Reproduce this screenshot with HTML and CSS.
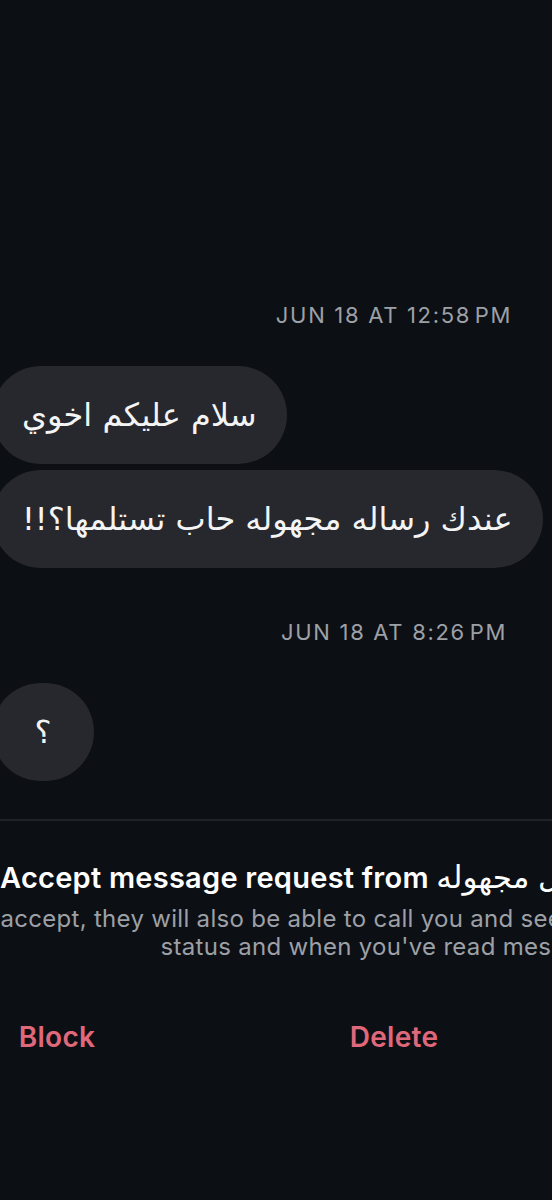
FILE: index.html
```html
<!DOCTYPE html>
<html lang="en">
<head>
    <meta charset="UTF-8">
    <meta name="viewport" content="width=device-width, initial-scale=1.0">
    <title>Message request</title>
    <link rel="stylesheet" href="styles.css">
</head>
<body>
    <div class="screen">
        <!-- Conversation -->
        <div class="conversation">
            <div class="date-divider first">JUN 18 AT 12:58&#8202;PM</div>
            <div class="bubble" dir="rtl">سلام عليكم اخوي</div>
            <div class="bubble" dir="rtl">عندك رساله مجهوله حاب تستلمها؟!!</div>

            <div class="date-divider">JUN 18 AT 8:26&#8202;PM</div>
            <div class="bubble round" dir="rtl">؟</div>
        </div>

        <!-- Message request panel -->
        <div class="request-panel">
            <div class="request-title">Accept message request from <bdi class="request-name">مجهول مجهوله</bdi>?</div>
            <p class="request-text">If you accept, they will also be able to call you and see info such as your activity<br>status and when you've read messages.</p>

            <div class="request-actions">
                <button class="action-button">Block</button>
                <button class="action-button">Delete</button>
                <button class="action-button">Accept</button>
            </div>
        </div>
    </div>
</body>
</html>
```

FILE: styles.css
```css
body {
    font-family: Inter, "DejaVu Sans", sans-serif;
    margin: 0;
    padding: 0;
    background-color: #0c0f14;
    color: #fff;
    overflow: hidden;
}
.screen {
    width: 836px;
    margin-left: -24px;
    height: 1200px;
}
.conversation {
    padding-top: 301px;
}
.date-divider {
    text-align: center;
    font-size: 22px;
    line-height: 28px;
    letter-spacing: 1.7px;
    color: #9da0a6;
    margin: 50px 0 37px;
}
.date-divider.first {
    margin: 0 0 37px;
}
.bubble {
    display: table;
    margin: 0 0 6px 16px;
    padding: 30px;
    min-width: 42px;
    background-color: #26282d;
    border-radius: 49px;
    font-family: "DejaVu Sans", sans-serif;
    font-size: 32px;
    line-height: 38px;
    color: #f4f4f5;
    text-align: center;
}
/* Styles for the request panel */
.request-panel {
    margin-top: 38px;
    border-top: 2px solid #1f2328;
}
.request-title {
    padding-left: 24px;
    margin-top: 40px;
    white-space: nowrap;
    font-size: 29px;
    line-height: 32px;
    letter-spacing: 0.25px;
    font-weight: 600;
    color: #fff;
}
.request-name {
    font-size: 31px;
    font-weight: 400;
}
.request-text {
    margin: 11px -300px 0; /* wider than the screen so long lines stay centred */
    text-align: center;
    white-space: nowrap;
    font-size: 24px;
    line-height: 28px;
    letter-spacing: 0.3px;
    color: #9da0a6;
}
.request-actions {
    display: grid;
    grid-template-columns: repeat(3, 160px);
    column-gap: 177px;
    justify-content: center;
    margin-top: 59px;
}
.action-button {
    background: none;
    border: none;
    padding: 0;
    font-family: Inter, sans-serif;
    font-size: 28px;
    line-height: 34px;
    letter-spacing: 0.3px;
    font-weight: 600;
    color: #e0687b;
    text-align: center;
}
```
